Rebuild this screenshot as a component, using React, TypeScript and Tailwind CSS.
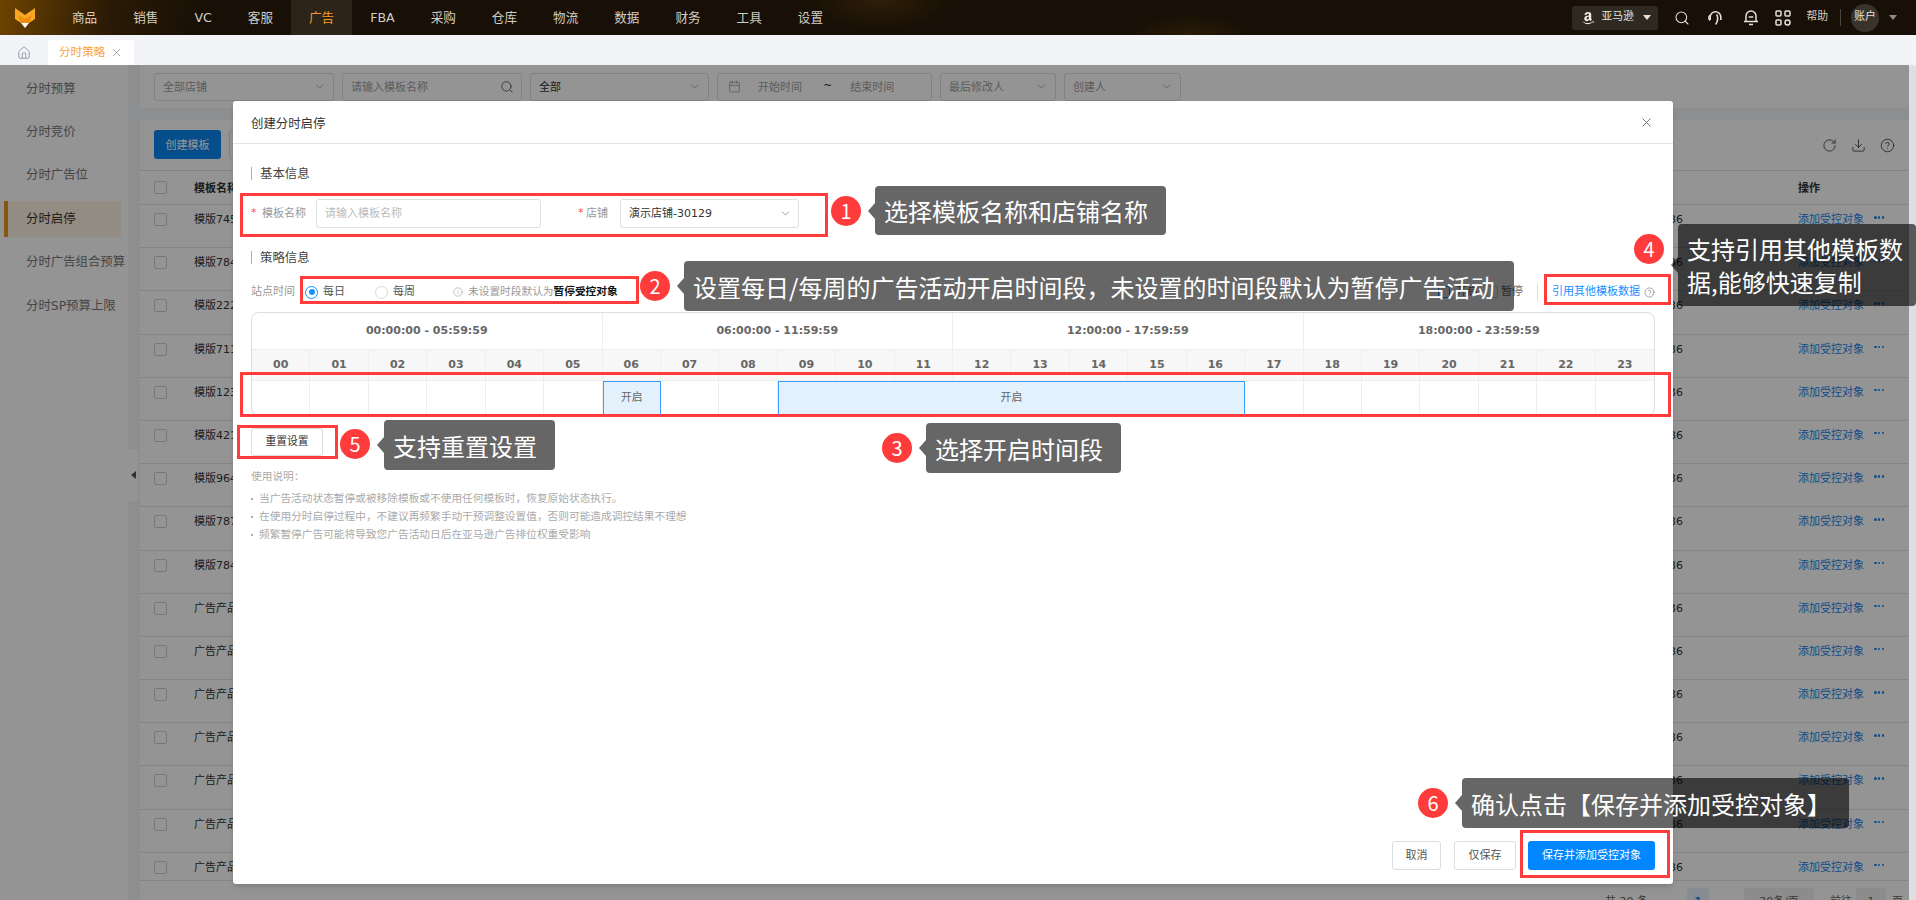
import React from "react";
import { ChevronDown, Search, Home, X, Calendar, RotateCw, Download, CircleHelp, Info } from "lucide-react";
import { FaAmazon } from "react-icons/fa";

const navItems = ["商品", "销售", "VC", "客服", "广告", "FBA", "采购", "仓库", "物流", "数据", "财务", "工具", "设置"];
const sideItems = ["分时预算", "分时竞价", "分时广告位", "分时启停", "分时广告组合预算", "分时SP预算上限"];
const rowNames = [
  "模版7451",
  "模版7842",
  "模版2223",
  "模版7114",
  "模版1235",
  "模版4216",
  "模版9647",
  "模版7878",
  "模版7849",
  "广告产品组",
  "广告产品组",
  "广告产品组",
  "广告产品组",
  "广告产品组",
  "广告产品组",
  "广告产品组",
];
const hours = Array.from({ length: 24 }, (_, i) => String(i).padStart(2, "0"));
const usage = [
  "当广告活动状态暂停或被移除模板或不使用任何模板时，恢复原始状态执行。",
  "在使用分时启停过程中，不建议再频繁手动干预调整设置值，否则可能造成调控结果不理想",
  "频繁暂停广告可能将导致您广告活动日后在亚马逊广告排位权重受影响",
];

// red outlines over the modal
const redBoxes = [
  "left-[240px] top-[193px] w-[588px] h-[44px]",
  "left-[300px] top-[276px] w-[339px] h-[28px]",
  "left-[240px] top-[372px] w-[1431px] h-[45px]",
  "left-[1544px] top-[274px] w-[127px] h-[31px]",
  "left-[237px] top-[425px] w-[101px] h-[34px]",
  "left-[1520px] top-[830px] w-[150px] h-[48px]",
];

const badges = [
  { n: 1, cls: "left-[831px] top-[196px]" },
  { n: 2, cls: "left-[640px] top-[271px]" },
  { n: 3, cls: "left-[882px] top-[433px]" },
  { n: 4, cls: "left-[1634px] top-[234px]" },
  { n: 5, cls: "left-[340px] top-[429px]" },
  { n: 6, cls: "left-[1418px] top-[788px]" },
];

const callouts = [
  { text: "选择模板名称和店铺名称", cls: "left-[875px] top-[186px] w-[291px] h-[49px]" },
  { text: "设置每日/每周的广告活动开启时间段，未设置的时间段默认为暂停广告活动", cls: "left-[684px] top-[261px] w-[830px] h-[50px]" },
  { text: "选择开启时间段", cls: "left-[926px] top-[423px] w-[195px] h-[50px]" },
  { text: "支持引用其他模板数据,能够快速复制", cls: "left-[1678px] top-[224px] w-[238px] h-[82px]" },
  { text: "支持重置设置", cls: "left-[384px] top-[420px] w-[171px] h-[50px]" },
  { text: "确认点击【保存并添加受控对象】", cls: "left-[1462px] top-[778px] w-[387px] h-[50px]" },
];

const FoxLogo = () => (
  <svg width="20" height="20" viewBox="0 0 20 20">
    <polygon points="0,0 10,7 20,0 20,11 14,15 6,15 0,11" fill="#f7a823" />
    <polygon points="3,7 10,11 17,7 14,15 6,15" fill="#f08c12" />
    <polygon points="6,15 14,15 10,20" fill="#ffffff" />
  </svg>
);

const HeadsetIcon = () => (
  <svg width="17" height="17" viewBox="0 0 17 17" fill="none" stroke="#e4e1da" strokeWidth="1.6">
    <path d="M3.2 11V8a5.3 5.3 0 0 1 10.6 0v3" />
    <path d="M3 6.5c-1.4.6-1.6 4 0 4.8" />
    <path d="M9.6 5.5c1.6 2 1.6 7-1 10" />
  </svg>
);

const BellIcon = () => (
  <svg width="16" height="17" viewBox="0 0 16 17" fill="none" stroke="#e4e1da" strokeWidth="1.5">
    <path d="M3 12V7a5 5 0 0 1 10 0v5" />
    <path d="M1 12.5h14" />
    <path d="M5.7 8h4.6" />
    <path d="M6 15.5h4" />
  </svg>
);

const GridIcon = () => (
  <svg width="16" height="16" viewBox="0 0 16 16" fill="none" stroke="#e4e1da" strokeWidth="1.5">
    <rect x="1" y="1" width="5" height="5" rx="1" />
    <rect x="10" y="1" width="5" height="5" rx="1" />
    <rect x="1" y="10" width="5" height="5" rx="1" />
    <circle cx="12.5" cy="12.5" r="2.5" />
  </svg>
);

const FilterSelect = ({ w, label, dark }: { w: string; label: string; dark?: boolean }) => (
  <div className={`${w} h-[28px] border border-[#dcdfe6] rounded-[3px] bg-white flex items-center justify-between pl-[8px] pr-[7px]`}>
    <span className={`pt-[4px] text-[11px] ${dark ? "text-[#333333]" : "text-[#a0a0a0]"}`}>{label}</span>
    <ChevronDown size={13} color="#999999" strokeWidth={1.5} />
  </div>
);

const SectionTitle = ({ title }: { title: string }) => (
  <div className="h-[13px] border-l border-[#f5a623] pl-[8px] flex items-center text-[12.4px] text-[#444444]">
    <span className="pt-[2px]">{title}</span>
  </div>
);

export default function App() {
  return (
    <div className="relative w-full h-screen overflow-hidden flex flex-col bg-[#f2f4f8] [font-family:'DejaVu_Sans','Noto_Sans_CJK_SC',sans-serif]">
      {/* Top bar */}
      <header className="h-[35px] shrink-0 flex items-center pl-[15px] pr-[19px] bg-[#181006] bg-[radial-gradient(ellipse_70px_30px_at_880px_0px,#2e1e07,transparent),radial-gradient(ellipse_60px_20px_at_1190px_35px,#2b1b07,transparent),linear-gradient(100deg,#6e4300_0px,#2a1a05_110px,#181006_200px)]">
        <FoxLogo />
        <nav className="flex h-full ml-[19px]">
          {navItems.map((item) => (
            <div
              key={item}
              className={`px-[18px] pt-[2px] h-full flex items-center justify-center text-[12.6px] ${
                item === "广告" ? "bg-[#2c2419] text-[#f59a23]" : "text-[#d2cec6]"
              }`}
            >
              {item}
            </div>
          ))}
        </nav>
        <div className="ml-auto flex items-center">
          <div className="w-[86px] h-[24px] rounded-[3px] bg-[#2e2a22] flex items-center pl-[9px] gap-[6px] text-[10.8px] text-[#e4e1da]">
            <FaAmazon size={14} color="#f2efe8" />
            <span>亚马逊</span>
            <span className="ml-[3px] w-0 h-0 border-x-[4px] border-x-transparent border-t-[5px] border-t-[#e4e1da]"></span>
          </div>
          <Search size={16} color="#e4e1da" strokeWidth={1.6} className="ml-[16px]" />
          <span className="ml-[17px] flex"><HeadsetIcon /></span>
          <span className="ml-[19px] flex"><BellIcon /></span>
          <span className="ml-[16px] flex"><GridIcon /></span>
          <span className="ml-[15px] text-[10.8px] text-[#d2cec6]">帮助</span>
          <span className="ml-[12px] w-px h-[17px] bg-[#4a453c]"></span>
          <div className="ml-[10px] w-[28px] h-[28px] rounded-full bg-[#38342c] flex items-center justify-center text-[10.8px] text-[#e4e1da]">账户</div>
          <span className="ml-[10px] w-0 h-0 border-x-[4px] border-x-transparent border-t-[5px] border-t-[#8d8a84]"></span>
        </div>
      </header>

      {/* Tabs */}
      <div className="h-[30px] shrink-0 flex items-end pl-[17px]">
        <div className="w-[31px] h-[25px] flex items-center">
          <Home size={14} color="#8f98a6" strokeWidth={1.6} />
        </div>
        <div className="w-[86px] h-[25px] bg-white rounded-t-[3px] flex items-center pl-[11px] gap-[5px] text-[11.6px] text-[#f9a33b]">
          <span>分时策略</span>
          <X size={13} color="#8f98a6" strokeWidth={1.5} />
        </div>
      </div>

      {/* Page */}
      <div className="flex-1 flex min-h-0">
        <aside className="relative w-[128px] shrink-0 bg-white pt-[6px] pl-[4px]">
          <ul className="flex flex-col gap-[7.4px]">
            {sideItems.map((item) => (
              <li
                key={item}
                className={`w-[117px] h-[36px] flex items-center whitespace-nowrap rounded-r-[2px] text-[12.4px] ${
                  item === "分时启停"
                    ? "bg-[#fdf1e0] border-l-[4px] border-[#e8961e] pl-[18px] text-[#333333]"
                    : "pl-[22px] text-[#777777]"
                }`}
              >
                {item}
              </li>
            ))}
          </ul>
          <div className="absolute left-[128px] top-[384px] w-[10px] h-[52px] bg-white rounded-r-[4px] flex items-center justify-center">
            <span className="w-0 h-0 border-y-[4px] border-y-transparent border-r-[5px] border-r-[#555555]"></span>
          </div>
        </aside>

        <main className="flex-1 min-w-0 ml-[12px] flex flex-col">
          {/* Filters */}
          <div className="h-[43px] shrink-0 bg-white flex items-center gap-[8px] pl-[14px]">
            <FilterSelect w="w-[180px]" label="全部店铺" />
            <div className="w-[180px] h-[28px] border border-[#dcdfe6] rounded-[3px] flex items-center justify-between pl-[8px] pr-[7px]">
              <span className="pt-[4px] text-[11px] text-[#a0a0a0]">请输入模板名称</span>
              <Search size={14} color="#555555" strokeWidth={1.5} />
            </div>
            <FilterSelect w="w-[179px]" label="全部" dark />
            <div className="w-[215px] h-[28px] border border-[#dcdfe6] rounded-[3px] flex items-center pl-[10px] text-[11px] text-[#a0a0a0]">
              <Calendar size={13} color="#999999" strokeWidth={1.4} />
              <span className="ml-[17px] pt-[4px]">开始时间</span>
              <span className="ml-[21px] text-[#333333]">~</span>
              <span className="ml-[18px] pt-[4px]">结束时间</span>
            </div>
            <FilterSelect w="w-[116px]" label="最后修改人" />
            <FilterSelect w="w-[117px]" label="创建人" />
          </div>

          {/* Table card */}
          <div className="flex-1 min-h-0 mt-[12px] bg-white flex flex-col pr-[1px]">
            <div className="h-[50px] shrink-0 flex items-start pt-[10px] pl-[14px] pr-[13px]">
              <button className="w-[67px] h-[29px] pt-[3px] rounded-[3px] bg-[#0a87f0] text-white text-[11px]">创建模板</button>
              <button className="ml-[8px] w-[67px] h-[29px] rounded-[3px] border border-[#dcdfe6] text-[11px]"></button>
              <div className="ml-auto flex items-center gap-[14px] pt-[8px] text-[#444444]">
                <RotateCw size={15} strokeWidth={1.4} />
                <Download size={15} strokeWidth={1.4} />
                <CircleHelp size={15} strokeWidth={1.4} />
              </div>
            </div>
            <div className="h-[35px] shrink-0 border-y border-[#e4e4e4] flex items-center text-[11px] font-bold text-[#333333]">
              <span className="ml-[14px] w-[13px] h-[13px] border border-[#cfcfcf] rounded-[2px] bg-white"></span>
              <span className="ml-[27px] pt-[4px]">模板名称</span>
              <span className="ml-auto mr-[88px] pt-[4px]">操作</span>
            </div>
            {rowNames.map((name, i) => (
              <div
                key={i}
                className={`shrink-0 flex items-start border-b border-[#e6e6e6] text-[11px] text-[#333333] ${i === 15 ? "h-[28px]" : "h-[43.2px]"}`}
              >
                <span className="ml-[14px] mt-[8px] w-[13px] h-[13px] border border-[#cfcfcf] rounded-[2px] bg-white"></span>
                <span className="ml-[27px] mt-[7px]">{name}</span>
                <span className="ml-auto mt-[7px]">2024-11-28 10:20:36</span>
                <span className="ml-[115px] mt-[7px] w-[64px] whitespace-nowrap text-[#1a85e8]">添加受控对象</span>
                <span className="ml-[12px] mr-[24px] mt-[11px] w-[10px] flex justify-between">
                  <span className="w-[2.5px] h-[2.5px] rounded-full bg-[#1a85e8]"></span>
                  <span className="w-[2.5px] h-[2.5px] rounded-full bg-[#1a85e8]"></span>
                  <span className="w-[2.5px] h-[2.5px] rounded-full bg-[#1a85e8]"></span>
                </span>
              </div>
            ))}
            {/* pagination, cut by the bottom of the window */}
            <div className="h-[35px] shrink-0 flex items-start pt-[7px] text-[11px] text-[#666666]">
              <span className="ml-[1465px] w-[50px] h-[28px] flex items-center whitespace-nowrap">共 20 条</span>
              <span className="ml-[18px] w-[6px] h-[28px] flex items-center">‹</span>
              <span className="ml-[8px] w-[22px] h-[28px] rounded-[2px] bg-[#e6f2fd] text-[#1a85e8] font-bold flex items-center justify-center">1</span>
              <span className="ml-[13px] w-[6px] h-[28px] flex items-center">›</span>
              <span className="ml-[16px] w-[70px] h-[28px] rounded-[2px] bg-[#f2f2f2] flex items-center justify-center">20条/页</span>
              <span className="ml-[16px] w-[26px] h-[28px] flex items-center">前往</span>
              <span className="w-[30px] h-[28px] rounded-[2px] bg-[#f2f2f2] flex items-center justify-center">1</span>
              <span className="ml-[6px] h-[28px] flex items-center">页</span>
            </div>
          </div>
        </main>

        {/* page scrollbar */}
        <div className="w-[7px] shrink-0 bg-[#dfdfe3] rounded-t-[3px]"></div>
      </div>

      {/* Modal overlay */}
      <div className="absolute left-0 right-[7px] top-[65px] bottom-0 bg-black/[0.42]">
        <div className="ml-[233px] mt-[36px] w-[1440px] h-[783px] bg-white rounded-[3px] shadow-md flex flex-col">
          <div className="h-[43px] shrink-0 border-b border-[#e4e4e4] flex items-center justify-between pl-[18px] pr-[19px] text-[12.4px] text-[#333333]">
            <span className="pt-[4px]">创建分时启停</span>
            <X size={15} color="#555555" strokeWidth={1.3} />
          </div>

          <div className="flex-1 min-h-0 px-[18px] pt-[23px]">
            <SectionTitle title="基本信息" />

            <div className="mt-[19px] flex items-center text-[11px] text-[#999999]">
              <span className="text-[#ff4d4f] w-[11px]">*</span>
              <span className="w-[54px] pt-[2px]">模板名称</span>
              <div className="w-[225px] h-[29px] pt-[2px] border border-[#dcdfe6] rounded-[3px] flex items-center pl-[8px] text-[#bbbbbb]">请输入模板名称</div>
              <span className="ml-[37px] text-[#ff4d4f] w-[8px]">*</span>
              <span className="w-[34px] pt-[2px]">店铺</span>
              <div className="w-[179px] h-[29px] border border-[#dcdfe6] rounded-[3px] flex items-center justify-between pl-[8px] pr-[6px] text-[#333333]">
                <span className="pt-[2px]">演示店铺-30129</span>
                <ChevronDown size={13} color="#888888" strokeWidth={1.5} />
              </div>
            </div>

            <div className="mt-[23px]">
              <SectionTitle title="策略信息" />
            </div>

            <div className="mt-[14px] h-[28px] flex items-center text-[11px] text-[#999999]">
              <span className="w-[54px]">站点时间</span>
              <span className="w-[13px] h-[13px] rounded-full border border-[#1890ff] flex items-center justify-center">
                <span className="w-[6px] h-[6px] rounded-full bg-[#1890ff]"></span>
              </span>
              <span className="ml-[5px] w-[52px] text-[#555555]">每日</span>
              <span className="w-[13px] h-[13px] rounded-full border border-[#d9d9d9]"></span>
              <span className="ml-[5px] w-[60px] text-[#555555]">每周</span>
              <Info size={10} color="#999999" strokeWidth={1.4} />
              <span className="ml-[5px] text-[10.7px]">未设置时段默认为</span>
              <span className="text-[10.7px] text-[#111111] font-bold">暂停受控对象</span>

              <div className="ml-auto flex items-center">
                <span className="w-[12px] h-[12px] rounded-[2px] border border-[#1890ff] bg-[#e3f1fd]"></span>
                <span className="ml-[6px] text-[#666666]">开启</span>
                <span className="ml-[8px] w-[12px] h-[12px] rounded-[2px] border border-[#cccccc]"></span>
                <span className="ml-[3px] text-[#666666]">暂停</span>
                <span className="ml-[14px] w-px h-[17px] bg-[#dddddd]"></span>
                <span className="ml-[14px] text-[#1890ff]">引用其他模板数据</span>
                <CircleHelp size={11} color="#777777" strokeWidth={1.4} className="ml-[4px]" />
              </div>
            </div>

            {/* Schedule */}
            <div className="mt-[6px] h-[104px] border border-[#dddddd] rounded-[8px] overflow-hidden flex flex-col text-[#666666]">
              <div className="h-[36px] grid grid-cols-4 text-[11px] font-bold">
                {["00:00:00 - 05:59:59", "06:00:00 - 11:59:59", "12:00:00 - 17:59:59", "18:00:00 - 23:59:59"].map((range) => (
                  <div key={range} className="flex items-center justify-center border-r border-[#eeeeee] last:border-r-0">
                    {range}
                  </div>
                ))}
              </div>
              <div className="h-[32px] grid grid-cols-[repeat(24,minmax(0,1fr))] bg-[#f7f7f7] border-y border-[#eeeeee] text-[11px] font-bold">
                {hours.map((h) => (
                  <div key={h} className="flex items-center justify-center border-r border-[#eeeeee] last:border-r-0">
                    {h}
                  </div>
                ))}
              </div>
              <div className="flex-1 grid grid-cols-[repeat(24,minmax(0,1fr))] text-[10.8px]">
                {hours.map((h, i) => {
                  if (i > 9 && i <= 16) return null;
                  if (i === 6 || i === 9) {
                    return (
                      <div
                        key={h}
                        className={`flex items-center justify-center bg-[#e3f1fd] border border-[#3aa0ff] ${i === 9 ? "col-span-8" : ""}`}
                      >
                        开启
                      </div>
                    );
                  }
                  return <div key={h} className="border-r border-[#eeeeee] last:border-r-0"></div>;
                })}
              </div>
            </div>

            <button className="mt-[12px] w-[72px] h-[28px] border border-[#dddddd] rounded-[3px] text-[10.8px] text-[#333333]">重置设置</button>

            <div className="mt-[13px] text-[10.7px] leading-[16px] text-[#aaaaaa]">使用说明：</div>
            <ul className="mt-[5px] text-[10.7px] leading-[18px] text-[#aaaaaa]">
              {usage.map((line) => (
                <li key={line} className="flex items-center">
                  <span className="w-[2px] h-[2px] bg-[#aaaaaa] mr-[6px]"></span>
                  {line}
                </li>
              ))}
            </ul>
          </div>

          <div className="shrink-0 flex justify-end items-center pr-[18px] pb-[14px] text-[11px]">
            <button className="w-[49px] h-[29px] pt-[2px] border border-[#dddddd] rounded-[3px] text-[#555555]">取消</button>
            <button className="ml-[13px] w-[62px] h-[29px] pt-[2px] border border-[#dddddd] rounded-[3px] text-[#555555]">仅保存</button>
            <button className="ml-[12px] w-[127px] h-[29px] pt-[2px] rounded-[3px] bg-[#0087ff] text-white">保存并添加受控对象</button>
          </div>
        </div>
      </div>

      {/* Annotations */}
      {redBoxes.map((cls) => (
        <div key={cls} className={`absolute border-[3px] border-[#ff3b3b] ${cls}`}></div>
      ))}
      {badges.map((b) => (
        <div
          key={b.n}
          className={`absolute w-[30px] h-[30px] rounded-full bg-[#ff3b3b] text-white text-[20px] flex items-center justify-center [font-family:'Noto_Sans_CJK_SC',sans-serif] ${b.cls}`}
        >
          {b.n}
        </div>
      ))}
      {callouts.map((c) => (
        <div
          key={c.text}
          className={`absolute rounded-[4px] bg-black/60 text-white text-[24px] leading-[33px] flex items-center pl-[9px] [font-family:'Noto_Sans_CJK_SC',sans-serif] ${c.cls}`}
        >
          <span className="absolute -left-[7px] top-1/2 -translate-y-1/2 w-0 h-0 border-y-[8px] border-y-transparent border-r-[7px] border-r-black/60"></span>
          <span>{c.text}</span>
        </div>
      ))}
    </div>
  );
}
